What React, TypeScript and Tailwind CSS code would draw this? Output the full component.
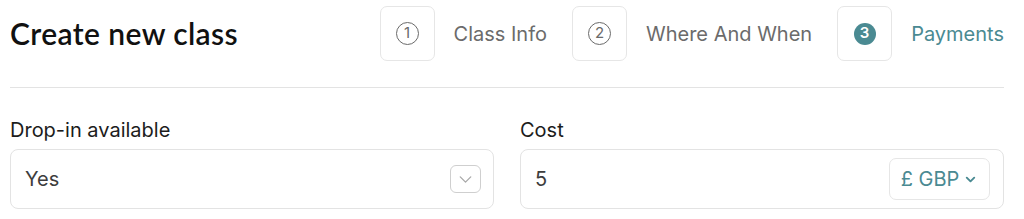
import { ChevronDown } from "lucide-react"

const steps = [
    { n: 1, label: "Class Info", active: false },
    { n: 2, label: "Where And When", active: false },
    { n: 3, label: "Payments", active: true },
]

function StepBadge({ n, active }: { n: number; active: boolean }) {
    return (
        <div className="w-[55px] h-[55px] rounded-[7px] border border-[#e6e6e6] flex items-center justify-center">
            {active ? (
                <div className="w-[22px] h-[22px] rounded-full bg-[#4a8a92] text-white text-[15px] font-semibold flex items-center justify-center">
                    {n}
                </div>
            ) : (
                <div className="w-[23px] h-[23px] rounded-full border-[1.5px] border-[#6a6a6a] text-[#6a6a6a] text-[15px] flex items-center justify-center">
                    {n}
                </div>
            )}
        </div>
    )
}

export default function App() {
    return (
        <div className="w-[1024px] h-[219px] bg-white pl-[10px] pr-[20px] font-['Inter',sans-serif] overflow-hidden">
            <header className="flex items-center justify-between h-[68px] pt-[6px] pb-[7px]">
                <h1 className="text-[30px] leading-none font-semibold text-[#111] tracking-[0.4px] font-['Lato',sans-serif] -mt-[2px]">
                    Create new class
                </h1>
                <nav className="flex items-center gap-[25px]">
                    {steps.map((s) => (
                        <div key={s.n} className="flex items-center gap-[19px]">
                            <StepBadge n={s.n} active={s.active} />
                            <span className={`text-[20px] ${s.active ? "text-[#4a8a92]" : "text-[#6b6b6b]"}`}>
                                {s.label}
                            </span>
                        </div>
                    ))}
                </nav>
            </header>

            <div className="mt-[19px] border-t border-[#e3e3e3]" />

            <div className="grid grid-cols-2 gap-[26px] mt-[30px]">
                <div className="flex flex-col gap-[7px]">
                    <label className="text-[20px] text-[#1c1c1c] leading-[24px]">Drop-in available</label>
                    <div className="h-[60px] rounded-[8px] border border-[#e3e3e3] flex items-center justify-between pl-[14px] pr-[12px]">
                        <span className="text-[20px] text-[#3d3d3d]">Yes</span>
                        <div className="w-[31px] h-[28px] rounded-[6px] border border-[#cfcfcf] flex items-center justify-center">
                            <ChevronDown className="w-[21px] h-[21px] text-[#a8a8a8]" strokeWidth={1.5} />
                        </div>
                    </div>
                </div>
                <div className="flex flex-col gap-[7px]">
                    <label className="text-[20px] text-[#1c1c1c] leading-[24px]">Cost</label>
                    <div className="h-[60px] rounded-[8px] border border-[#e3e3e3] flex items-center justify-between pl-[14px] pr-[13px]">
                        <span className="text-[20px] text-[#3d3d3d]">5</span>
                        <button className="h-[42px] w-[101px] rounded-[7px] border border-[#e6e6e6] flex items-center justify-center gap-[4px] text-[20px] text-[#4a8a92]">
                            £ GBP
                            <ChevronDown className="w-[15px] h-[15px]" strokeWidth={3} />
                        </button>
                    </div>
                </div>
            </div>
        </div>
    )
}
